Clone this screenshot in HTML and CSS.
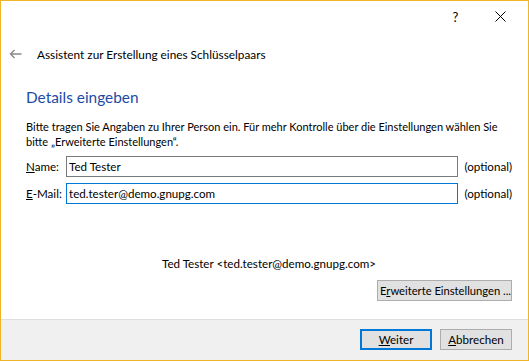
FILE: index.html
```html
<!DOCTYPE html>
<html lang="de">
<head>
  <meta charset="UTF-8">
  <title>Assistent zur Erstellung eines Schlüsselpaars</title>
  <link rel="stylesheet" href="styles.css">
</head>
<body>
  <div class="dialog">
    <div class="titlebar">
      <span class="caption-btn">?</span>
      <span class="caption-btn">
        <svg width="11" height="11" viewBox="0 0 11 11"><path d="M0.5 0.5L10.5 10.5M10.5 0.5L0.5 10.5" stroke="#000" stroke-width="1"/></svg>
      </span>
    </div>

    <div class="wizard-head">
      <svg class="back" width="13" height="10" viewBox="0 0 13 10"><path d="M12.5 5H1.5M5.5 1L1.5 5L5.5 9" stroke="#8a8a8a" stroke-width="1.4" fill="none"/></svg>
      <span class="wizard-title">Assistent zur Erstellung eines Schlüsselpaars</span>
    </div>

    <div class="content">
      <h1 class="page-title">Details eingeben</h1>
      <p class="intro">Bitte tragen Sie Angaben zu Ihrer Person ein. Für mehr Kontrolle über die Einstellungen wählen Sie bitte „Erweiterte Einstellungen“.</p>

      <div class="form">
        <label class="label"><u>N</u>ame:</label>
        <input class="field" type="text" value="Ted Tester">
        <span class="hint">(optional)</span>

        <label class="label"><u>E</u>-Mail:</label>
        <input class="field focused" type="text" value="ted.tester@demo.gnupg.com">
        <span class="hint">(optional)</span>
      </div>

      <div class="preview">Ted Tester &lt;ted.tester@demo.gnupg.com&gt;</div>

      <div class="advanced-row">
        <button class="button advanced">E<u>r</u>weiterte Einstellungen ...</button>
      </div>
    </div>

    <div class="footer">
      <button class="button default"><u>W</u>eiter</button>
      <button class="button"><u>A</u>bbrechen</button>
    </div>
  </div>
</body>
</html>
```

FILE: styles.css
```css
body {
  margin: 0;
  font-family: Lato, "Liberation Sans", sans-serif;
  font-size: 11.6px;
  color: #000;
  background: #fff;
}
.dialog {
  width: 529px;
  height: 361px;
  box-sizing: border-box;
  border: 1px solid #f0b429;
  display: flex;
  flex-direction: column;
  background: #fff;
}
.titlebar {
  height: 31px;
  display: flex;
  justify-content: flex-end;
  align-items: center;
  padding-right: 5px;
}
.caption-btn {
  width: 45px;
  height: 31px;
  display: flex;
  justify-content: center;
  align-items: center;
  font-size: 13px;
}
.wizard-head {
  height: 44px;
  display: flex;
  align-items: center;
  padding-left: 8px;
}
.back {
  margin-right: 15px;
}
.wizard-title {
  font-size: 11.8px;
}
.content {
  flex: 1;
  padding: 0 16px 0 25px;
}
.page-title {
  margin: 11px 0 0;
  font-size: 15.4px;
  line-height: 21px;
  font-weight: normal;
  color: #1b4ba5;
}
.intro {
  margin: 11px 0 0;
  font-size: 11px;
  line-height: 15px;
}
.form {
  margin-top: 7px;
  display: grid;
  grid-template-columns: 34px 1fr auto;
  column-gap: 6px;
  row-gap: 6px;
  align-items: center;
}
.label {
  white-space: nowrap;
}
.field {
  height: 21px;
  box-sizing: border-box;
  margin: 0;
  padding: 0 2px;
  border: 1px solid #7a7a7a;
  font: inherit;
  color: #000;
  outline: none;
}
.field.focused {
  border-color: #0078d7;
}
.preview {
  margin-top: 52px;
  line-height: 15px;
  text-align: center;
}
.advanced-row {
  margin-top: 9px;
  display: flex;
  justify-content: flex-end;
}
.button {
  height: 21px;
  box-sizing: border-box;
  padding: 0 2px;
  border: 1px solid #adadad;
  background: #e1e1e1;
  font: inherit;
  color: #000;
  white-space: nowrap;
}
.advanced {
  width: 135px;
  font-size: 11.2px;
}
.footer {
  height: 41px;
  box-sizing: border-box;
  border-top: 1px solid #dfdfdf;
  background: #f0f0f0;
  display: flex;
  justify-content: flex-end;
  gap: 8px;
  padding: 9px 16px 0 0;
}
.footer .button {
  width: 72px;
}
.default {
  border: 2px solid #0078d7;
}
```
